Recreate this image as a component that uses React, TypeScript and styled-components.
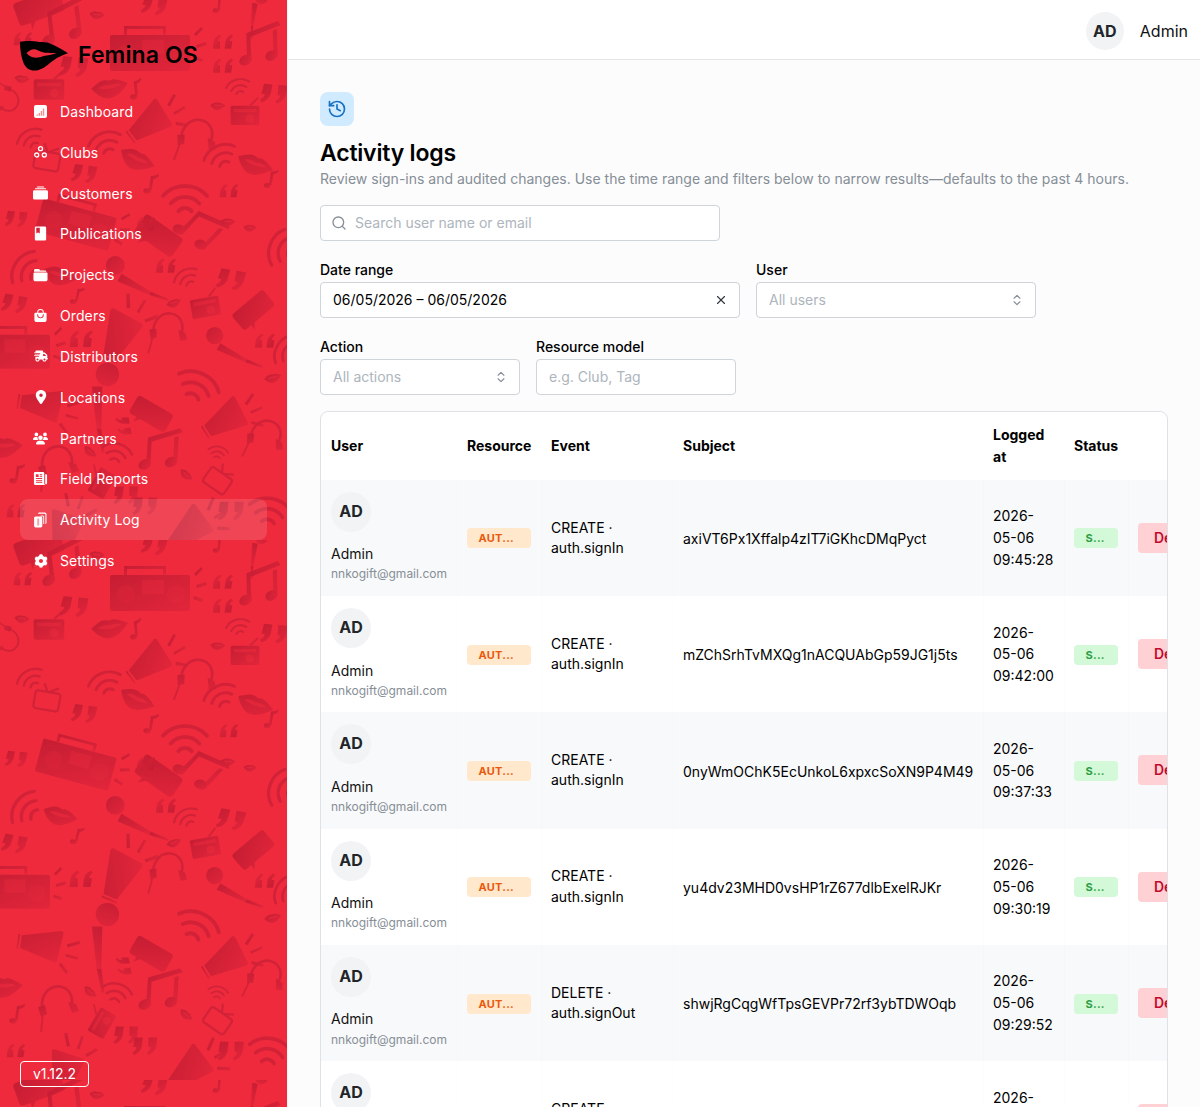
import React from "react";
import styled, { createGlobalStyle } from "styled-components";
import { Search, X, ChevronsUpDown, History } from "lucide-react";
import { BsCollectionFill } from "react-icons/bs";
import { MdBook } from "react-icons/md";
import { RiSettings3Fill } from "react-icons/ri";
import { FaTruckFast, FaLocationDot, FaUsers } from "react-icons/fa6";
import { IoNewspaper, IoBagHandle } from "react-icons/io5";

const Global = createGlobalStyle`
  html, body { margin: 0; padding: 0; height: 100%; overflow: hidden; }
  body { font-family: Inter, "Liberation Sans", sans-serif; color: #000; }
  #root { height: 100vh; }
  * { box-sizing: border-box; }
`;

const Shell = styled.div`
  display: flex;
  height: 100vh;
  overflow: hidden;
  background: #fcfcfd;
`;

const Sidebar = styled.aside`
  position: relative;
  flex: 0 0 288px;
  display: flex;
  flex-direction: column;
  padding: 41px 20px 20px;
  background: #ee2a3c;
  border-right: 1px solid #f5f5f6;
  overflow: hidden;
`;

const PatternSvg = styled.svg`
  position: absolute;
  inset: 0;
  width: 100%;
  height: 100%;
`;

const Brand = styled.div`
  position: relative;
  display: flex;
  align-items: center;
  gap: 10px;
  height: 30px;
`;

const BrandName = styled.span`
  font-weight: 600;
  font-size: 23px;
  letter-spacing: 0.1px;
  color: #000;
  padding-bottom: 2px;
`;

const Nav = styled.nav`
  position: relative;
  display: flex;
  flex-direction: column;
  margin-top: 20px;
`;

const NavItem = styled.a<{ $active?: boolean }>`
  display: flex;
  align-items: center;
  gap: 12px;
  width: 247px;
  height: 40.83px;
  padding-left: 13px;
  border-radius: 8px;
  color: #fff;
  font-size: 14px;
  letter-spacing: 0.1px;
  background: ${(p) => (p.$active ? "rgba(255,255,255,0.13)" : "transparent")};
`;

const NavIcon = styled.span`
  flex: none;
  width: 15px;
  height: 16px;
  display: flex;
  align-items: center;
  justify-content: center;
  svg { flex: none; }
`;

const Version = styled.div`
  position: relative;
  margin-top: auto;
  align-self: flex-start;
  width: 69px;
  height: 26px;
  border: 1px solid #fff;
  border-radius: 4px;
  color: #fff;
  font-size: 14px;
  line-height: 24px;
  text-align: center;
`;

const Main = styled.main`
  flex: 1;
  min-width: 0;
  display: flex;
  flex-direction: column;
`;

const TopBar = styled.header`
  flex: 0 0 60px;
  display: flex;
  align-items: center;
  justify-content: flex-end;
  gap: 16px;
  padding: 2px 12px 0 0;
  background: #fff;
  border-bottom: 1px solid #e3e4e6;
`;

const Avatar = styled.div<{ $size: number }>`
  flex: none;
  width: ${(p) => p.$size}px;
  height: ${(p) => p.$size}px;
  border-radius: 50%;
  background: #f1f3f5;
  color: #212529;
  font-size: 16px;
  font-weight: 700;
  display: flex;
  align-items: center;
  justify-content: center;
`;

const TopName = styled.span`
  font-size: 16px;
  color: #111;
`;

const Content = styled.div`
  padding: 32px 32px 0;
`;

const IconBox = styled.div`
  width: 34px;
  height: 34px;
  border-radius: 8px;
  background: #d0ebff;
  color: #1971c2;
  display: flex;
  align-items: center;
  justify-content: center;
`;

const Title = styled.h1`
  margin: 12px 0 0;
  font-size: 23px;
  font-weight: 600;
  line-height: 30px;
  letter-spacing: -0.2px;
  color: #000;
`;

const Sub = styled.p`
  margin: 0;
  font-size: 14px;
  line-height: 21.7px;
  color: #868e96;
`;

const InputBox = styled.div<{ $w: number }>`
  width: ${(p) => p.$w}px;
  height: 36px;
  display: flex;
  align-items: center;
  gap: 8px;
  padding: 0 11px 0 12px;
  background: #fff;
  border: 1px solid #ced4da;
  border-radius: 4px;
  font-size: 14px;
  font-weight: 400;
  color: #000;
  svg { flex: none; }
`;

const Grow = styled.span<{ $muted?: boolean }>`
  flex: 1;
  color: ${(p) => (p.$muted ? "#adb5bd" : "#000")};
`;

const SearchRow = styled(InputBox)`
  margin-top: 15px;
  padding-left: 10px;
`;

const FilterRow = styled.div`
  display: flex;
  gap: 16px;
  margin-top: 19px;
`;

const Field = styled.label`
  display: flex;
  flex-direction: column;
  gap: 2px;
  font-size: 14px;
  font-weight: 500;
  line-height: 20px;
  color: #000;
`;

const TableWrap = styled.div`
  margin-top: 16px;
  width: 848px;
  border: 1px solid #dee2e6;
  border-radius: 8px;
  overflow: hidden;
  background: #fff;
`;

const Table = styled.table`
  table-layout: fixed;
  width: 900px;
  border-collapse: collapse;
  font-size: 14px;
  line-height: 21.7px;
  color: #000;
`;

const Th = styled.th<{ $w: number }>`
  width: ${(p) => p.$w}px;
  height: 68px;
  padding: 0 10px;
  text-align: left;
  font-weight: 700;
`;

const Row = styled.tr<{ $striped: boolean }>`
  background: ${(p) => (p.$striped ? "#f8f9fa" : "#fff")};
`;

const Td = styled.td`
  padding: 12px 10px;
  vertical-align: middle;
  & + & { box-shadow: inset 1px 0 0 rgba(233, 236, 239, 0.12); }
`;

const UserName = styled.div`
  margin-top: 11.5px;
  color: #111;
`;

const Email = styled.div`
  margin-top: 0.5px;
  font-size: 12px;
  line-height: 18.6px;
  color: #868e96;
`;

const Badge = styled.div<{ $bg: string; $fg: string; $w: number }>`
  width: ${(p) => p.$w}px;
  height: 20px;
  margin-top: 1px;
  padding-left: 11.5px;
  border-radius: 4px;
  background: ${(p) => p.$bg};
  color: ${(p) => p.$fg};
  font-size: 11px;
  font-weight: 700;
  line-height: 20px;
  letter-spacing: 0.25px;
`;

const EventText = styled.div`
  line-height: 20.3px;
  word-break: break-all;
`;

const Subject = styled.div`
  padding-top: 2px;
  white-space: nowrap;
`;

const Action = styled.div`
  width: 72px;
  height: 30px;
  padding: 0 16px;
  border-radius: 4px;
  background: #ffd0d4;
  color: #c00b2c;
  font-size: 14px;
  font-weight: 600;
  line-height: 30px;
`;

const rows = [
  ["CREATE ·", "auth.signIn", "axiVT6Px1Xffalp4zIT7iGKhcDMqPyct", "2026-", "05-06", "09:45:28"],
  ["CREATE ·", "auth.signIn", "mZChSrhTvMXQg1nACQUAbGp59JG1j5ts", "2026-", "05-06", "09:42:00"],
  ["CREATE ·", "auth.signIn", "0nyWmOChK5EcUnkoL6xpxcSoXN9P4M49", "2026-", "05-06", "09:37:33"],
  ["CREATE ·", "auth.signIn", "yu4dv23MHD0vsHP1rZ677dlbExelRJKr", "2026-", "05-06", "09:30:19"],
  ["DELETE ·", "auth.signOut", "shwjRgCqgWfTpsGEVPr72rf3ybTDWOqb", "2026-", "05-06", "09:29:52"],
  ["CREATE ·", "auth.signIn", "fQ2mZkP8sLtV0xYhRn7uAeC3jWbG6dNo", "2026-", "05-06", "09:21:07"],
];

const DashIcon = () => (
  <svg width="13" height="13" viewBox="0 0 13 13">
    <rect width="13" height="13" rx="2" fill="#fff" />
    <path d="M2.500 9.500h1.400v1.200H2.500zM4.600 8h1.400v2.700H4.600zM6.700 6h1.400v4.700H6.700zM8.800 3.500h1.400v7.200H8.800z" fill="#f58a94" />
  </svg>
);

const ClubsIcon = () => (
  <svg width="13" height="12" viewBox="0 0 13 12" fill="none" stroke="#fff" strokeWidth="1.300">
    <circle cx="6.500" cy="2.700" r="2" />
    <circle cx="2.700" cy="9" r="2" />
    <circle cx="10.300" cy="9" r="2" />
  </svg>
);

const FolderIcon = () => (
  <svg width="15" height="14" viewBox="0 0 15 14" fill="#fff">
    <path d="M1 2.500C1 1.700 1.600 1 2.400 1h3c.5 0 .9.200 1.200.6l.6.900h4.800c.7 0 1.300.5 1.500 1.200H1z" />
    <path d="M.500 5.500c0-.6.500-1 1-1h12c.6 0 1 .4 1 1v6c0 1-.8 1.800-1.800 1.800H2.300C1.300 13.300.500 12.500.500 11.500z" />
  </svg>
);

const DocsIcon = () => (
  <svg width="15" height="16" viewBox="0 0 15 16">
    <path d="M5 1.800C5 1.100 5.600.500 6.300.500h5.400c1 0 1.800.8 1.800 1.800v8.400c0 .7-.5 1.200-1.100 1.300V2.600c0-.5-.4-.9-.9-.9H5z" fill="#fff" />
    <path d="M7.500 3.500h2.300c.8 0 1.400.6 1.400 1.400v7h-1V5c0-.3-.3-.5-.6-.5h-2z" fill="#fff" opacity=".9" />
    <path d="M2.700 4.500h5c.9 0 1.600.7 1.600 1.600v7.700c0 .9-.7 1.600-1.600 1.600h-5c-.9 0-1.600-.7-1.600-1.600V6.100c0-.9.7-1.600 1.600-1.600z" fill="#fff" />
    <path d="M4.200 6.500h2v7h-2z" fill="#f8a0aa" />
  </svg>
);

const nav: [string, React.ReactNode][] = [
  ["Dashboard", <DashIcon />],
  ["Clubs", <ClubsIcon />],
  ["Customers", <BsCollectionFill size={15} color="#fff" />],
  ["Publications", <MdBook size={17} color="#fff" />],
  ["Projects", <FolderIcon />],
  ["Orders", <IoBagHandle size={15} color="#fff" />],
  ["Distributors", <FaTruckFast size={14} color="#fff" />],
  ["Locations", <FaLocationDot size={14} color="#fff" />],
  ["Partners", <FaUsers size={15} color="#fff" />],
  ["Field Reports", <IoNewspaper size={15} color="#fff" />],
  ["Activity Log", <DocsIcon />],
  ["Settings", <RiSettings3Fill size={16} color="#fff" />],
];

/* ---- background doodles ---- */
const F = "url(#dg)";
const shapes: Record<string, React.ReactNode> = {
  boombox: (
    <g fill={F}>
      <path d="M-38-13h76a2 2 0 0 1 2 2v32a2 2 0 0 1-2 2h-76a2 2 0 0 1-2-2v-32a2 2 0 0 1 2-2z" />
      <path d="M-26-13v-9h42v9h-3v-6h-36v6z" />
      <rect x="-8" y="-8" width="22" height="14" fill="#ee2a3c" opacity=".35" />
      <circle cx="-24" cy="6" r="9" fill="#ee2a3c" opacity=".18" />
      <circle cx="26" cy="6" r="9" fill="#ee2a3c" opacity=".18" />
      <path d="M44-14l7-7 2 2-7 7zM46-3l10-3 1 3-10 3zM44 8l9 3-1 3-9-3z" />
    </g>
  ),
  notes: (
    <g fill={F}>
      <path d="M-14-18l30-6 2 4-29 6-3 22h-4zM10-16l4-1-3 21h-4z" />
      <ellipse cx="-19" cy="6" rx="6" ry="4.500" transform="rotate(-20 -19 6)" />
      <ellipse cx="5" cy="6" rx="6" ry="4.500" transform="rotate(-20 5 6)" />
    </g>
  ),
  note: (
    <g fill={F}>
      <path d="M-2-10c3 0 6-1 8-3l1 2c-2 3-4 4-6 4l-1 13h-3z" />
      <ellipse cx="-5" cy="7" rx="4" ry="3" />
    </g>
  ),
  lips: (
    <g fill={F}>
      <path d="M-22-3C-14-8-9-11-4-10c3 0 4 2 6 1 4-2 10 1 20 7C14 6 6 12-2 12-10 12-17 5-22-3z" />
      <path d="M-14-2C-8-5-2-4 0-3 6-5 11-3 14-2 7 1-6 2-14-2z" fill="#ee2a3c" opacity=".6" />
    </g>
  ),
  quote: (
    <g fill={F}>
      <path d="M-14-12h10l-1 10c-1 6-5 10-10 12l-2-3c3-2 5-4 5-7h-4zM3-12h11l-1 10c-1 6-5 10-10 12l-2-3c3-2 5-4 5-7H3z" />
    </g>
  ),
  wifi: (
    <g fill="none" stroke="#cf2036" strokeWidth="3.600" strokeLinecap="round">
      <path d="M-20-2C-10-14 10-14 20-2" />
      <path d="M-13 5C-6-3 6-3 13 5" />
      <path d="M-6 12C-3 8 3 8 6 12" />
    </g>
  ),
  megaphone: (
    <g fill={F}>
      <path d="M-26-5L18-22c2 0 3 1 3 3l1 32c0 2-1 3-3 3L-24 10z" />
      <path d="M-30-5l2-1 2 17-2 1z" />
      <path d="M28-8l13-8 2 3-13 8zM30 3l15 0v3H30zM27 14l11 9-2 3-11-9z" />
    </g>
  ),
  mic: (
    <g fill={F}>
      <circle cx="-14" cy="-12" r="9" />
      <path d="M-8-4l28 17-2 3-30-13z" />
      <path d="M20 13l17 7-1 2-18-6z" />
    </g>
  ),
  speech: (
    <g fill={F}>
      <path d="M-24-11a4 4 0 0 1 4-4h40a4 4 0 0 1 4 4v16a4 4 0 0 1-4 4H-8l-6 7 1-7h-7a4 4 0 0 1-4-4z" />
    </g>
  ),
  radio: (
    <g fill={F}>
      <path d="M-16-9h32a2 2 0 0 1 2 2v20a2 2 0 0 1-2 2h-32a2 2 0 0 1-2-2V-7a2 2 0 0 1 2-2z" />
      <path d="M5-10L16-20l1 2L8-9z" />
      <rect x="-14" y="-5" width="28" height="4" fill="#ee2a3c" opacity=".5" />
      <circle cx="6" cy="7" r="5" fill="#ee2a3c" opacity=".5" />
    </g>
  ),
  tv: (
    <g fill="none" stroke="#cf2036" strokeWidth="2.600" strokeLinejoin="round">
      <rect x="-14" y="-9" width="28" height="20" rx="3" />
      <path d="M-1-9l-5-9M1-9l10-6" />
    </g>
  ),
  headphone: (
    <g>
      <path d="M-15 6C-17-22 17-22 15 2" fill="none" stroke="#cf2036" strokeWidth="2.800" />
      <path d="M-19 5l7-2 2 9-6 3zM11 0l8 2 3 7-7 2z" fill={F} />
      <path d="M-15 13l-2 17h2.500l1-17z" fill={F} />
    </g>
  ),
};

const doodles: [string, number, number, number, number][] = [
  ["speech", 40, 10, -20, 1], ["notes", 68, 28, -15, 1.15], ["lips", 97, 15, 5, 0.35],
  ["quote", 155, 7, 10, 0.8], ["boombox", 150, 48, 0, 1], ["note", 220, 5, 0, 0.8], ["mic", 257, 10, 70, 0.7],
  ["notes", 265, 50, -10, 1.1], ["quote", 222, 41, 180, 0.65], ["quote", 222, 65, 180, 0.65],
  ["quote", 22, 38, 180, 0.6], ["radio", 49, 87, 0, 0.85], ["lips", 22, 79, 5, 0.35], ["headphone", 8, 100, 120, 0.7],
  ["lips", 110, 88, -10, 0.85], ["quote", 75, 68, 5, 0.9], ["note", 137, 90, -10, 0.9],
  ["megaphone", 150, 123, -30, 0.85], ["headphone", 197, 135, 15, 1], ["radio", 245, 113, 0, 0.8],
  ["wifi", 238, 86, -15, 0.6], ["lips", 218, 106, 0, 0.35], ["quote", 275, 95, 5, 0.85],
  ["wifi", 105, 142, -20, 0.85], ["lips", 137, 160, 25, 0.85], ["wifi", 220, 155, -25, 0.85], ["lips", 255, 165, 20, 0.85],
  ["tv", 47, 160, 10, 0.9], ["wifi", 30, 138, -30, 0.7], ["quote", 85, 175, 8, 0.8],
  ["note", 152, 185, 5, 0.9], ["wifi", 185, 198, 0, 1.1], ["note", 272, 180, 5, 0.85], ["quote", 228, 190, 180, 0.6],
  ["boombox", 77, 220, 15, 0.95], ["quote", 17, 220, 5, 0.7], ["speech", 157, 238, 35, 0.95], ["quote", 145, 223, 180, 0.6],
  ["notes", 200, 236, 35, 1.1], ["lips", 228, 222, 0, 0.35], ["wifi", 280, 248, -70, 0.95], ["lips", 250, 228, 0, 0.3],
  ["wifi", 25, 268, -55, 0.95], ["lips", 60, 276, 15, 0.8], ["mic", 130, 278, 0, 1.05], ["quote", 165, 265, 180, 0.65],
  ["wifi", 186, 277, -30, 0.65], ["radio", 205, 305, -10, 0.8], ["quote", 232, 281, 10, 0.9], ["speech", 255, 312, -40, 0.85],
  ["quote", 15, 305, 10, 0.8], ["note", 78, 297, 10, 0.8], ["lips", 174, 303, -20, 0.35],
  ["megaphone", 120, 335, -60, 0.95], ["boombox", 12, 347, 0, 0.95], ["quote", 80, 338, 180, 0.75],
  ["headphone", 168, 328, 10, 0.95], ["mic", 228, 347, 0, 0.95], ["quote", 264, 340, 180, 0.65], ["wifi", 285, 350, -60, 0.8],
  ["lips", 273, 378, -15, 0.4], ["wifi", 198, 385, 25, 1.1], ["mic", 103, 398, 60, 1.3],
  ["megaphone", 42, 405, 15, 0.85], ["speech", 150, 416, 30, 0.85], ["quote", 123, 427, 80, 0.6],
  ["megaphone", 226, 420, -25, 0.85], ["headphone", 266, 435, 20, 0.95], ["lips", 3, 447, 0, 0.9],
  ["headphone", 57, 462, 0, 1], ["note", 18, 475, 5, 0.9], ["lips", 90, 452, 40, 0.35], ["wifi", 117, 452, 15, 0.75],
  ["radio", 100, 482, -60, 0.75], ["notes", 165, 456, -5, 1.1], ["lips", 186, 475, 40, 0.35], ["wifi", 218, 452, 10, 0.5],
  ["tv", 218, 480, 35, 0.9], ["quote", 127, 496, 0, 0.8], ["quote", 146, 507, 0, 0.8], ["quote", 15, 510, 180, 0.6],
  ["megaphone", 65, 533, -70, 0.9], ["megaphone", 190, 530, -35, 0.9], ["quote", 232, 512, 0, 0.85], ["wifi", 270, 510, 10, 1.05],
];

const Doodles = () => (
  <PatternSvg aria-hidden="true">
    <defs>
      <linearGradient id="dg" x1="0" y1="0" x2="1" y2="1">
        <stop offset="0" stopColor="#bf1b31" />
        <stop offset="1" stopColor="#e1253a" />
      </linearGradient>
      <pattern id="tile" width="287" height="540" patternUnits="userSpaceOnUse">
        {doodles.map(([k, x, y, r, s], i) => (
          <g key={i} transform={`translate(${x} ${y}) rotate(${r}) scale(${s})`} opacity="0.85">
            {shapes[k]}
          </g>
        ))}
      </pattern>
    </defs>
    <rect width="100%" height="100%" fill="url(#tile)" />
  </PatternSvg>
);

const Logo = () => (
  <svg width="48" height="30" viewBox="0 0 48 30">
    <path
      d="M0 .8C6-.4 14 .2 19 1c4 .3 7-.4 11 1.500 7 3 13 6.500 18 9.800C40 15 35 18 30 22c-4 3.500-9 7-14 7.500-6 .5-10-2-12.500-7.500C1 16 0 8 0 .8z"
      fill="#000"
    />
    <path
      d="M6.500 12C10 8.500 13 7.500 16 8.500c3 1.500 6 3 9 3.200 4 .2 8 0 11.500 .5-5 1.800-9 1.800-13 2.800-3 1.200-6 2-10 1.500C10.500 16 8 14 6.500 12z"
      fill="#ee2a3c"
    />
  </svg>
);

export default function App() {
  return (
    <Shell>
      <Global />
      <Sidebar>
        <Doodles />
        <Brand>
          <Logo />
          <BrandName>Femina OS</BrandName>
        </Brand>
        <Nav>
          {nav.map(([label, icon]) => (
            <NavItem key={label} $active={label === "Activity Log"}>
              <NavIcon>{icon}</NavIcon>
              {label}
            </NavItem>
          ))}
        </Nav>
        <Version>v1.12.2</Version>
      </Sidebar>
      <Main>
        <TopBar>
          <Avatar $size={38}>AD</Avatar>
          <TopName>Admin</TopName>
        </TopBar>
        <Content>
          <IconBox>
            <History size={20} strokeWidth={2} />
          </IconBox>
          <Title>Activity logs</Title>
          <Sub>Review sign-ins and audited changes. Use the time range and filters below to narrow results—defaults to the past 4 hours.</Sub>
          <SearchRow $w={400}>
            <Search size={16} color="#868e96" />
            <Grow $muted>Search user name or email</Grow>
          </SearchRow>
          <FilterRow>
            <Field>
              Date range
              <InputBox $w={420}>
                <Grow>06/05/2026 – 06/05/2026</Grow>
                <X size={14} color="#343a40" />
              </InputBox>
            </Field>
            <Field>
              User
              <InputBox $w={280}>
                <Grow $muted>All users</Grow>
                <ChevronsUpDown size={14} color="#868e96" />
              </InputBox>
            </Field>
          </FilterRow>
          <FilterRow>
            <Field>
              Action
              <InputBox $w={200}>
                <Grow $muted>All actions</Grow>
                <ChevronsUpDown size={14} color="#868e96" />
              </InputBox>
            </Field>
            <Field>
              Resource model
              <InputBox $w={200}>
                <Grow $muted>e.g. Club, Tag</Grow>
              </InputBox>
            </Field>
          </FilterRow>
          <TableWrap>
            <Table>
              <thead>
                <tr>
                  <Th $w={136}>User</Th>
                  <Th $w={84}>Resource</Th>
                  <Th $w={132}>Event</Th>
                  <Th $w={310}>Subject</Th>
                  <Th $w={81}>Logged at</Th>
                  <Th $w={64}>Status</Th>
                  <Th $w={93}></Th>
                </tr>
              </thead>
              <tbody>
                {rows.map((r, i) => (
                  <Row key={i} $striped={i % 2 === 0}>
                    <Td>
                      <Avatar $size={40}>AD</Avatar>
                      <UserName>Admin</UserName>
                      <Email>nnkogift@gmail.com</Email>
                    </Td>
                    <Td>
                      <Badge $bg="#ffe8cc" $fg="#e8590c" $w={64}>AUT...</Badge>
                    </Td>
                    <Td>
                      <EventText>
                        {r[0]}
                        <br />
                        {r[1]}
                      </EventText>
                    </Td>
                    <Td>
                      <Subject>{r[2]}</Subject>
                    </Td>
                    <Td>
                      {r[3]}
                      <br />
                      {r[4]}
                      <br />
                      {r[5]}
                    </Td>
                    <Td>
                      <Badge $bg="#d3f9d8" $fg="#2f9e44" $w={44}>S...</Badge>
                    </Td>
                    <Td>
                      <Action>Details</Action>
                    </Td>
                  </Row>
                ))}
              </tbody>
            </Table>
          </TableWrap>
        </Content>
      </Main>
    </Shell>
  );
}
